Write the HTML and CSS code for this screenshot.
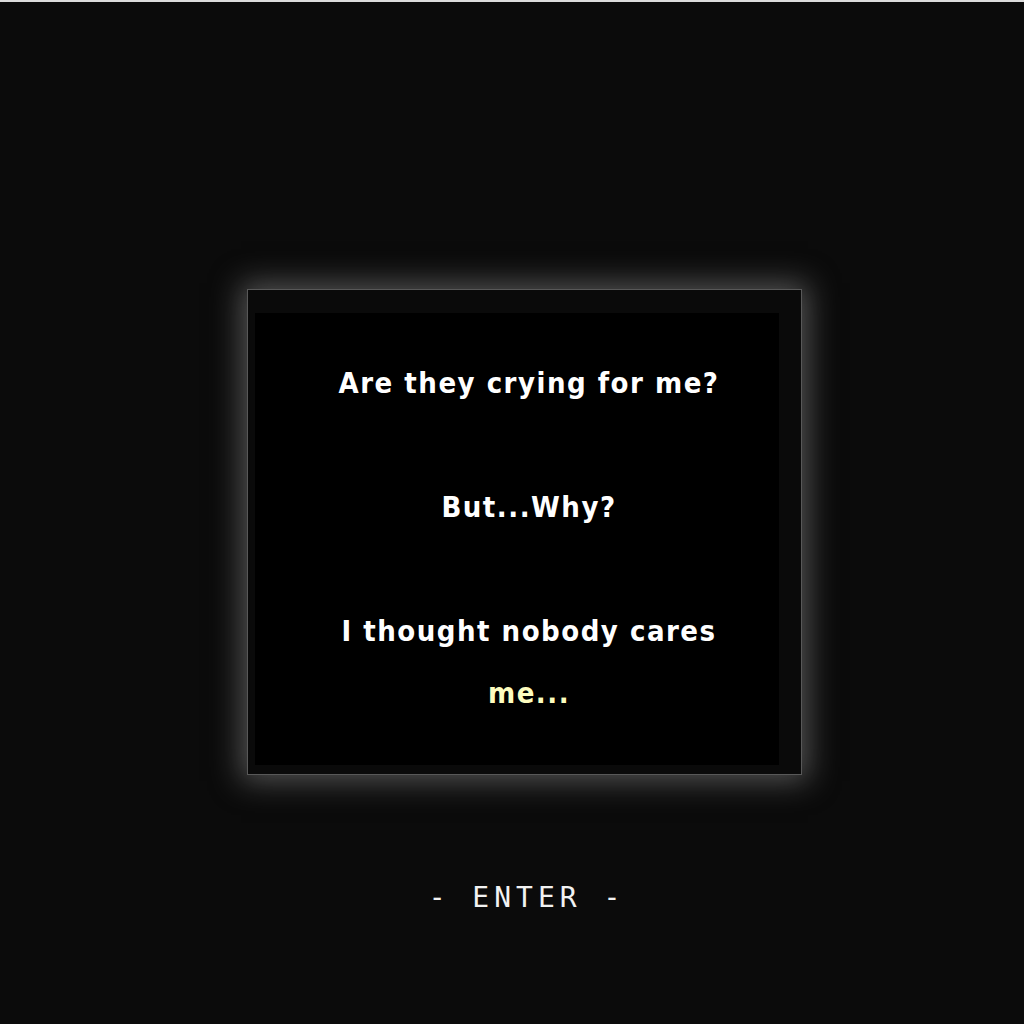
FILE: index.html
```html
<!DOCTYPE html>
<html>
<head>
<meta charset="utf-8">
<link rel="stylesheet" href="styles.css">
</head>
<body>
<main class="stage">
  <section class="dialog">
    <div class="dialog-inner">
      <p class="line">Are they crying for me?</p>
      <p class="line">But...Why?</p>
      <p class="line">I thought nobody cares<br><span class="typing">me...</span></p>
    </div>
  </section>
  <div class="enter">- ENTER -</div>
</main>
</body>
</html>
```
FILE: styles.css
```css
html, body {
  margin: 0;
  padding: 0;
  background: #0b0b0b;
}
body {
  border-top: 2px solid #dcdcdc;
  min-height: 1022px;
  box-sizing: border-box;
}
.stage {
  display: flex;
  flex-direction: column;
  align-items: center;
  padding-top: 287px;
  padding-left: 25px;
}
.dialog {
  border: 1px solid #585858;
  background: #0a0a0a;
  padding: 23px 22px 9px 7px;
  box-shadow: 0 0 28px 6px rgba(95, 95, 95, 0.85);
}
.dialog-inner {
  background: #000;
  width: 524px;
  height: 452px;
  box-sizing: border-box;
  padding: 39px 0 0 24px;
  text-align: center;
  font-family: "DejaVu Sans", "Liberation Sans", sans-serif;
  font-stretch: condensed;
  font-weight: bold;
  font-size: 29px;
  letter-spacing: 1.5px;
  line-height: 62px;
  color: #fff;
}
.line {
  margin: 0 0 62px 0;
}
.typing {
  color: #fdfcbf;
}
.enter {
  margin-top: 103px;
  font-family: "DejaVu Sans Mono", "Liberation Mono", monospace;
  font-size: 28px;
  line-height: 40px;
  letter-spacing: 5px;
  padding-left: 5px;
  color: #f2f2f2;
}
```
